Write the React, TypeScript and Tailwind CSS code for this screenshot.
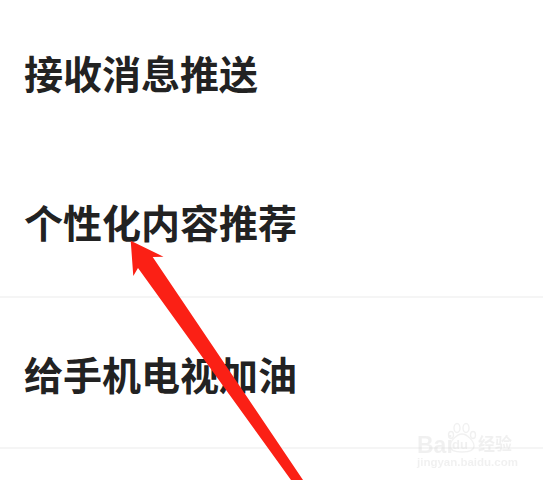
export default function App() {
  const font = { fontFamily: '"Noto Sans CJK SC", "Noto Sans", sans-serif' };
  const latin = { fontFamily: '"Liberation Sans", sans-serif' };
  const rows = [
    { t: "接收消息推送", h: "h-[144px] pb-[2px]", b: "" },
    { t: "个性化内容推荐", h: "h-[154px]", b: "border-b-2 border-[#f5f5f5]" },
    { t: "给手机电视加油", h: "h-[151px]", b: "border-b-2 border-[#f5f5f5]" },
  ];
  return (
    <div className="relative w-[543px] h-[480px] overflow-hidden bg-white" style={font}>
      <div className="flex flex-col">
        {rows.map((r) => (
          <div key={r.t} className={`${r.h} ${r.b} flex items-center pl-[24px] box-border`}>
            <span className="text-[39px] leading-none font-bold text-[#222222] whitespace-nowrap pt-[2px]">{r.t}</span>
          </div>
        ))}
      </div>
      <svg className="absolute left-0 top-0" width="543" height="480" viewBox="0 0 543 480">
        <polygon points="130.7,240.7 163.5,256.7 152.7,257 303,480 291,480 138,268 133.3,276" fill="#fb2015" />
      </svg>
      <div className="absolute left-[417px] top-[422px] w-[125px] h-[50px] opacity-40 blur-[0.4px] text-[#dcdcdc]">
        <svg className="absolute left-[30px] top-0" width="32" height="32" viewBox="0 0 32 32" fill="none" stroke="#dcdcdc" strokeWidth="1.4">
          <ellipse cx="10" cy="6" rx="3" ry="4.5" />
          <ellipse cx="19" cy="6" rx="3" ry="4.5" />
          <ellipse cx="4" cy="13" rx="2.5" ry="3.5" />
          <ellipse cx="26" cy="13" rx="2.5" ry="3.5" />
          <path d="M15 12c-5 0-12 7-12 12 0 5 5 6 12 6s12-1 12-6c0-5-7-12-12-12z" />
        </svg>
        <span className="absolute left-0 top-[12px] text-[23px] leading-none font-bold" style={latin}>Bai</span>
        <span className="absolute left-[35px] top-[16px] text-[13px] leading-none font-bold" style={latin}>du</span>
        <span className="absolute left-[61px] top-[12px] text-[17px] leading-none font-bold">经验</span>
        <span className="absolute left-0 top-[35px] text-[11.5px] leading-none font-bold" style={latin}>jingyan.baidu.com</span>
      </div>
    </div>
  );
}
